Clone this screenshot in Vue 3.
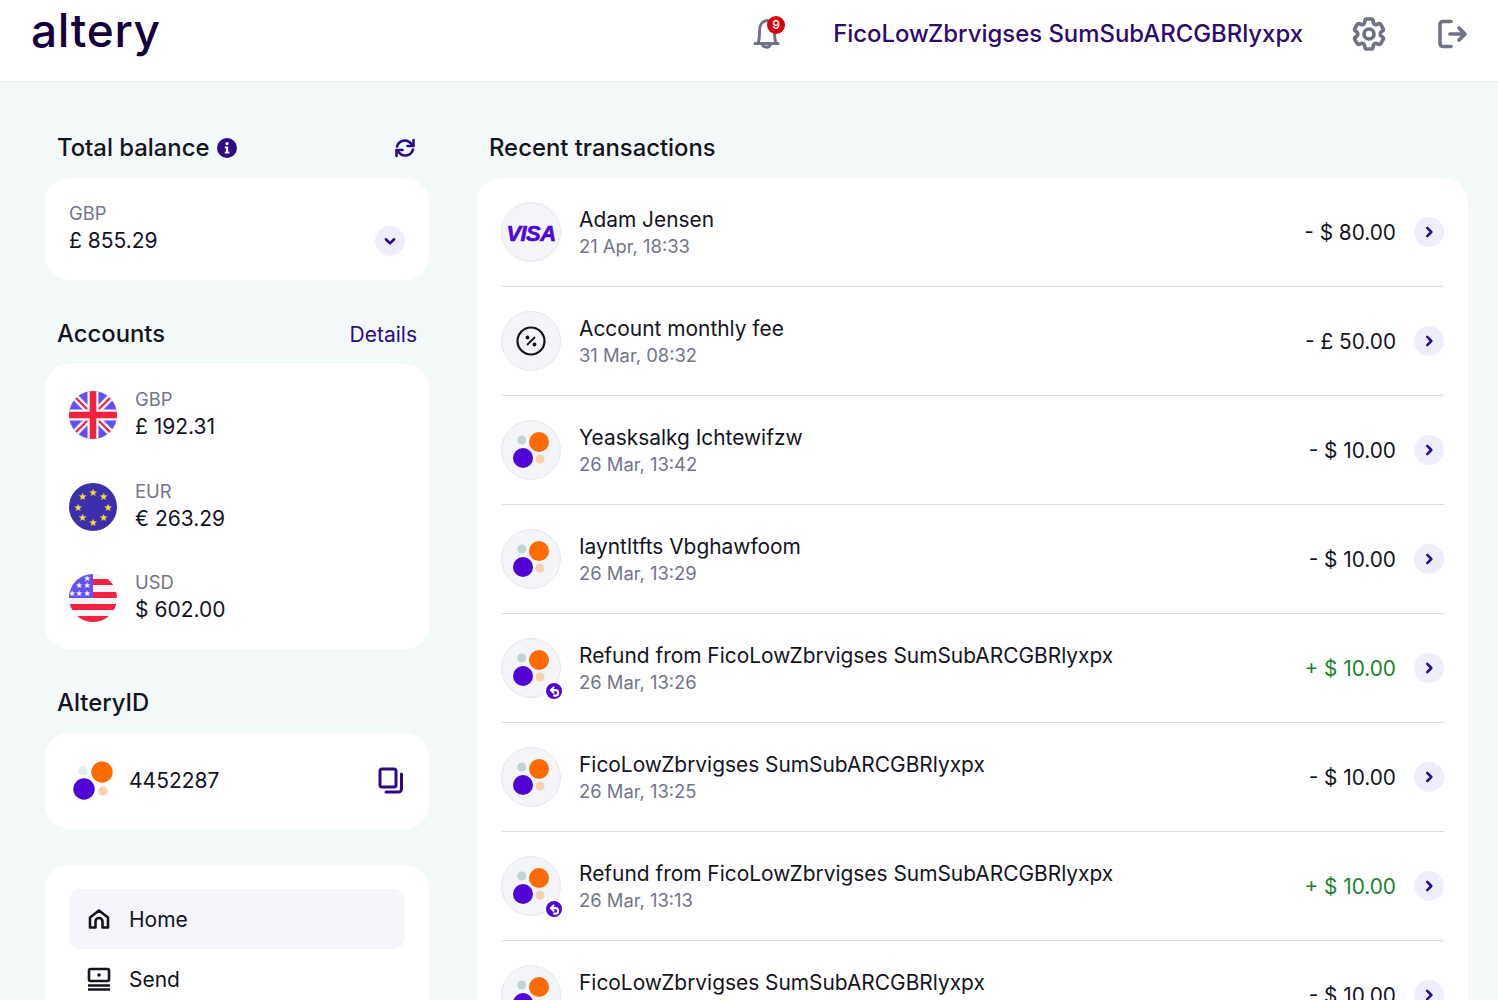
<script setup>
const accounts = [
  { code: "GBP", amount: "£ 192.31", flag: "uk" },
  { code: "EUR", amount: "€ 263.29", flag: "eu" },
  { code: "USD", amount: "$ 602.00", flag: "us" }
];

const company = "FicoLowZbrvigses SumSubARCGBRlyxpx";

const transactions = [
  { name: "Adam Jensen", date: "21 Apr, 18:33", amount: "- $ 80.00", icon: "visa" },
  { name: "Account monthly fee", date: "31 Mar, 08:32", amount: "- £ 50.00", icon: "fee" },
  { name: "Yeasksalkg Ichtewifzw", date: "26 Mar, 13:42", amount: "- $ 10.00", icon: "dots" },
  { name: "Iayntltfts Vbghawfoom", date: "26 Mar, 13:29", amount: "- $ 10.00", icon: "dots" },
  { name: "Refund from " + company, date: "26 Mar, 13:26", amount: "+ $ 10.00", icon: "dots", refund: true },
  { name: company, date: "26 Mar, 13:25", amount: "- $ 10.00", icon: "dots" },
  { name: "Refund from " + company, date: "26 Mar, 13:13", amount: "+ $ 10.00", icon: "dots", refund: true },
  { name: company, date: "26 Mar, 13:10", amount: "- $ 10.00", icon: "dots" }
];

const euStars = Array.from({ length: 8 }, (_, i) => {
  const a = (i * Math.PI) / 4;
  return { x: 24 + 15 * Math.sin(a), y: 24 - 15 * Math.cos(a) };
});
</script>

<template>
  <div class="page">
    <header class="topbar">
      <div class="logo">altery</div>
      <div class="top-right">
        <div class="bell">
          <svg width="30" height="36" viewBox="0 0 30 36" fill="none" stroke="#6f7282" stroke-width="3" stroke-linecap="round" stroke-linejoin="round">
            <path d="M3 27.500h23" />
            <path d="M6 27c1.500-3 1.500-7 1.500-12 0-6 3-10 7.500-10.500 5 .5 7.500 4.500 7.500 10.500 0 5 0 9 1.500 12" />
            <path d="M10.500 28.500a4.500 5 0 0 0 8 0" />
          </svg>
          <span class="bell-badge">9</span>
        </div>
        <div class="company">{{ company }}</div>
        <svg class="gear" width="40" height="40" viewBox="0 0 24 24" fill="none" stroke="#6f7282" stroke-width="2.200" stroke-linecap="round" stroke-linejoin="round">
          <path d="M9.594 3.940c.09-.542.56-.94 1.110-.94h2.593c.55 0 1.020.398 1.110.94l.213 1.281c.063.374.313.686.645.870.074.040.147.083.22.127.325.196.72.257 1.075.124l1.217-.456a1.125 1.125 0 0 1 1.370.490l1.296 2.247a1.125 1.125 0 0 1-.26 1.431l-1.003.827c-.293.241-.438.613-.43.992a7.723 7.723 0 0 1 0 .255c-.008.378.137.75.43.991l1.004.827c.424.35.534.955.26 1.430l-1.298 2.247a1.125 1.125 0 0 1-1.369.491l-1.217-.456c-.355-.133-.75-.072-1.076.124a6.470 6.470 0 0 1-.22.128c-.331.183-.581.495-.644.869l-.213 1.281c-.09.543-.56.94-1.110.94h-2.594c-.55 0-1.019-.398-1.110-.94l-.213-1.281c-.062-.374-.312-.686-.644-.870a6.520 6.520 0 0 1-.22-.127c-.325-.196-.72-.257-1.076-.124l-1.217.456a1.125 1.125 0 0 1-1.369-.49l-1.297-2.247a1.125 1.125 0 0 1 .26-1.431l1.004-.827c.292-.24.437-.613.43-.991a6.932 6.932 0 0 1 0-.255c.007-.38-.138-.751-.43-.992l-1.004-.827a1.125 1.125 0 0 1-.26-1.430l1.297-2.247a1.125 1.125 0 0 1 1.370-.491l1.216.456c.356.133.751.072 1.076-.124.072-.044.146-.086.22-.128.332-.183.582-.495.644-.869l.214-1.280Z" />
          <circle cx="12" cy="12" r="3" />
        </svg>
        <svg class="logout" width="32" height="32" viewBox="0 0 32 32" fill="none" stroke="#6f7282" stroke-width="3.600" stroke-linecap="round" stroke-linejoin="round">
          <path d="M15 3.500H7a3 3 0 0 0-3 3v19a3 3 0 0 0 3 3h8" />
          <path d="M14 16h15M23 10l6 6-6 6" />
        </svg>
      </div>
    </header>

    <main class="layout">
      <aside class="side">
        <div class="section-head first">
          <div class="title-wrap">
            <h2>Total balance</h2>
            <svg width="20" height="20" viewBox="0 0 20 20">
              <circle cx="10" cy="10" r="10" fill="#2e0a87" />
              <circle cx="10" cy="5.600" r="1.600" fill="#fff" />
              <path d="M7.800 8.500h3.400v5.200h1.200v1.800H7.800v-1.800h1.100v-3.400H7.800Z" fill="#fff" />
            </svg>
          </div>
          <svg width="24" height="24" viewBox="0 0 24 24" fill="none" stroke="#2e0a87" stroke-width="2.600" stroke-linecap="round" stroke-linejoin="round">
            <path d="M4 10.500A8 8 0 0 1 18 7.500l2 2" />
            <path d="M20.500 4v6h-6" />
            <path d="M20 13.500A8 8 0 0 1 6 16.500l-2-2" />
            <path d="M3.500 20v-6h6" />
          </svg>
        </div>
        <section class="card balance">
          <div>
            <div class="code">GBP</div>
            <div class="value">£ 855.29</div>
          </div>
          <button class="round-btn">
            <svg width="14" height="14" viewBox="0 0 12 12" fill="none" stroke="#2e0a87" stroke-width="2.200" stroke-linecap="round" stroke-linejoin="round"><path d="M2.500 4.500L6 8l3.500-3.500" /></svg>
          </button>
        </section>

        <div class="section-head">
          <h2>Accounts</h2>
          <a class="details">Details</a>
        </div>
        <section class="card accounts">
          <div v-for="acc in accounts" :key="acc.code" class="account">
            <svg class="flag" width="48" height="48" viewBox="0 0 48 48">
              <defs>
                <clipPath :id="'clip-' + acc.flag"><circle cx="24" cy="24" r="24" /></clipPath>
              </defs>
              <g :clip-path="'url(#clip-' + acc.flag + ')'">
                <template v-if="acc.flag === 'uk'">
                  <rect width="48" height="48" fill="#6250f5" />
                  <path d="M0 0L48 48M48 0L0 48" stroke="#f4f6f8" stroke-width="7" />
                  <path d="M4 4L19 19M44 4L29 19M4 44L19 29M44 44L29 29" stroke="#f5213f" stroke-width="2.200" />
                  <path d="M24 0V48M0 24H48" stroke="#f4f6f8" stroke-width="11" />
                  <path d="M24 0V48M0 24H48" stroke="#f5213f" stroke-width="6.500" />
                </template>
                <template v-else-if="acc.flag === 'eu'">
                  <rect width="48" height="48" fill="#3c2fae" />
                  <text v-for="(s, i) in euStars" :key="i" :x="s.x" :y="s.y + 3.500" class="eu-star" text-anchor="middle">★</text>
                </template>
                <template v-else>
                  <rect width="48" height="48" fill="#f1f4f6" />
                  <rect y="5" width="48" height="6" fill="#f5213f" />
                  <rect y="18" width="48" height="6" fill="#f5213f" />
                  <rect y="30" width="48" height="6" fill="#f5213f" />
                  <rect y="42" width="48" height="6" fill="#f5213f" />
                  <rect width="24" height="24" fill="#6250f5" />
                  <text x="18" y="7" class="us-star" text-anchor="middle">★</text>
                  <text x="10" y="14" class="us-star" text-anchor="middle">★</text>
                  <text x="18" y="14" class="us-star" text-anchor="middle">★</text>
                  <text x="3" y="22" class="us-star" text-anchor="middle">★</text>
                  <text x="10" y="22" class="us-star" text-anchor="middle">★</text>
                  <text x="18" y="22" class="us-star" text-anchor="middle">★</text>
                </template>
              </g>
            </svg>
            <div>
              <div class="code">{{ acc.code }}</div>
              <div class="value">{{ acc.amount }}</div>
            </div>
          </div>
        </section>

        <div class="section-head">
          <h2>AlteryID</h2>
        </div>
        <section class="card altery-id">
          <div class="id-left">
            <svg width="40" height="40" viewBox="0 0 40 40">
              <circle cx="29" cy="11" r="10.700" fill="#ff6b00" />
              <circle cx="10" cy="10" r="4.700" fill="#e2eef0" />
              <circle cx="11" cy="28" r="10.700" fill="#5005d6" />
              <circle cx="30" cy="30" r="4.700" fill="#f5d1ac" />
            </svg>
            <span class="value">4452287</span>
          </div>
          <svg width="26" height="28" viewBox="0 0 26 28" fill="none" stroke="#2e0a87" stroke-width="3" stroke-linecap="round" stroke-linejoin="round">
            <rect x="2" y="2" width="16" height="18" rx="2" />
            <path d="M23.500 7v15a3 3 0 0 1-3 3H8" />
          </svg>
        </section>

        <section class="card nav">
          <div class="nav-item active">
            <svg width="24" height="24" viewBox="0 0 24 24" fill="none" stroke="#14141f" stroke-width="2.600" stroke-linejoin="round">
              <path d="M3 20.500V10.500L12 3.500l9 7v10h-5.500v-6a3.500 3.500 0 0 0-7 0v6Z" />
            </svg>
            <span>Home</span>
          </div>
          <div class="nav-item">
            <svg width="24" height="24" viewBox="0 0 24 24" fill="none" stroke="#14141f" stroke-width="2.600">
              <rect x="2" y="2" width="20" height="12" rx="1.500" />
              <circle cx="12" cy="8" r="1.800" fill="#14141f" stroke="none" />
              <path d="M1 18.500h22M1 22.500h22" />
            </svg>
            <span>Send</span>
          </div>
        </section>
      </aside>

      <section class="content">
        <div class="section-head first">
          <h2>Recent transactions</h2>
        </div>
        <div class="card tx-card">
          <div v-for="(tx, i) in transactions" :key="i" class="tx">
            <div class="avatar">
              <span v-if="tx.icon === 'visa'" class="visa">VISA</span>
              <svg v-else-if="tx.icon === 'fee'" width="30" height="30" viewBox="0 0 30 30" fill="none" stroke="#14141f" stroke-width="2.200" stroke-linecap="round">
                <circle cx="15" cy="15" r="13.500" />
                <path d="M18.500 11.500l-7 7" stroke-width="1.800" />
                <circle cx="11.500" cy="11.500" r="0.900" fill="#14141f" />
                <circle cx="18.500" cy="18.500" r="0.900" fill="#14141f" />
              </svg>
              <svg v-else width="40" height="40" viewBox="0 0 40 40">
                <circle cx="28" cy="12" r="10" fill="#ff6b00" />
                <circle cx="10.700" cy="10" r="4.500" fill="#c3d3d6" />
                <circle cx="12" cy="28" r="10" fill="#5005d6" />
                <circle cx="29" cy="29" r="4.500" fill="#f5d1ac" />
              </svg>
              <span v-if="tx.refund" class="refund-badge">
                <svg width="11" height="11" viewBox="0 0 12 12" fill="none" stroke="#fff" stroke-width="2.200" stroke-linecap="round" stroke-linejoin="round">
                  <path d="M5 1.500L2 4.500l3 3" />
                  <path d="M2.500 4.500H7a3 3 0 0 1 0 6H5.500" />
                </svg>
              </span>
            </div>
            <div class="tx-text">
              <div class="tx-name">{{ tx.name }}</div>
              <div class="tx-date">{{ tx.date }}</div>
            </div>
            <div class="tx-amount" :class="{ plus: tx.refund }">{{ tx.amount }}</div>
            <button class="round-btn">
              <svg width="14" height="14" viewBox="0 0 12 12" fill="none" stroke="#2e0a87" stroke-width="2.200" stroke-linecap="round" stroke-linejoin="round"><path d="M4.500 2.500L8 6l-3.500 3.500" /></svg>
            </button>
          </div>
        </div>
      </section>
    </main>
  </div>
</template>

<style>
html, body {
  margin: 0;
  overflow: hidden;
  background: #f3f8f8;
}
</style>

<style scoped>
.page {
  height: 1000px;
  overflow: hidden;
  background: #f3f8f8;
  font-family: Inter, "Liberation Sans", sans-serif;
  color: #14141f;
}

.topbar {
  height: 81px;
  background: #fff;
  border-bottom: 1px solid #e6ebee;
  display: flex;
  justify-content: space-between;
  align-items: center;
  padding: 0 30px 0 31px;
}

.logo {
  font-size: 46px;
  font-weight: 500;
  line-height: 1;
  color: #14003c;
  margin-top: -22px;
  letter-spacing: 0.7px;
}

.top-right {
  display: flex;
  align-items: center;
  margin-top: -14px;
}

.bell {
  position: relative;
  width: 30px;
  height: 36px;
  margin-right: 51px;
}

.bell-badge {
  position: absolute;
  top: 0;
  right: -3px;
  width: 18px;
  height: 18px;
  border-radius: 50%;
  background: #d90007;
  color: #fff;
  font-size: 12px;
  font-weight: 600;
  line-height: 18px;
  text-align: center;
}

.company {
  font-size: 23.9px;
  font-weight: 500;
  color: #2e0a6f;
}

.gear {
  margin-left: 46px;
}

.logout {
  margin-left: 47px;
}

.layout {
  display: flex;
  gap: 48px;
  padding: 0 30px 0 45px;
}

.side {
  width: 384px;
  flex-shrink: 0;
}

.content {
  flex: 1;
}

.section-head {
  display: flex;
  justify-content: space-between;
  align-items: center;
  height: 30px;
  padding: 0 12px;
  margin: 39px 0 15px;
}

.section-head.first {
  margin-top: 51px;
}

.title-wrap {
  display: flex;
  align-items: center;
  gap: 8px;
}

h2 {
  margin: 0 0 1px;
  font-size: 23.85px;
  font-weight: 500;
}

.details {
  font-size: 21px;
  color: #2e0a87;
}

.card {
  background: #fff;
  border-radius: 24px;
}

.balance {
  height: 102px;
  box-sizing: border-box;
  padding: 24px;
  display: flex;
  justify-content: space-between;
  align-items: flex-end;
}

.code {
  font-size: 18.4px;
  line-height: 22px;
  color: #73758a;
}

.value {
  font-size: 21px;
  line-height: 28px;
  margin: 3px 0 1px;
}

.round-btn {
  width: 30px;
  height: 30px;
  padding: 0;
  border: none;
  border-radius: 50%;
  background: #eeedfc;
  display: flex;
  align-items: center;
  justify-content: center;
  flex-shrink: 0;
}

.accounts {
  height: 285px;
  box-sizing: border-box;
  padding: 24px;
}

.account {
  display: flex;
  align-items: center;
  gap: 18px;
  height: 54px;
  margin-bottom: 37.5px;
}

.account:last-child {
  margin-bottom: 0;
}

.eu-star {
  font-size: 10px;
  fill: #ffe019;
  font-family: "DejaVu Sans", sans-serif;
}

.us-star {
  font-size: 8px;
  fill: #fff;
  font-family: "DejaVu Sans", sans-serif;
}

.altery-id {
  height: 96px;
  box-sizing: border-box;
  padding: 0 25px 0 28px;
  display: flex;
  justify-content: space-between;
  align-items: center;
}

.altery-id .value {
  margin: 0;
}

.id-left {
  display: flex;
  align-items: center;
  gap: 16px;
}

.nav {
  margin-top: 36px;
  padding: 24px;
}

.nav-item {
  height: 60px;
  display: flex;
  align-items: center;
  gap: 18px;
  padding: 0 18px;
  font-size: 21px;
  border-radius: 12px;
}

.nav-item.active {
  background: #f5f5fb;
}

.tx-card {
  padding: 0 24px;
}

.tx {
  height: 108px;
  display: flex;
  align-items: center;
  border-bottom: 1px solid #dcdce6;
}

.tx:last-child {
  border-bottom: none;
}

.avatar {
  position: relative;
  width: 60px;
  height: 60px;
  box-sizing: border-box;
  border-radius: 50%;
  border: 1px solid #e6e7ec;
  background: #f3f5f8;
  display: flex;
  align-items: center;
  justify-content: center;
  flex-shrink: 0;
}

.visa {
  font-family: "Liberation Sans", sans-serif;
  font-size: 22px;
  font-weight: 700;
  font-style: italic;
  color: #5005d6;
  letter-spacing: -0.6px;
  -webkit-text-stroke: 0.6px #5005d6;
  margin-top: 3px;
}

.refund-badge {
  position: absolute;
  right: -4px;
  bottom: -4px;
  width: 16px;
  height: 16px;
  border: 2px solid #fff;
  border-radius: 50%;
  background: #5005d6;
  display: flex;
  align-items: center;
  justify-content: center;
}

.tx-text {
  flex: 1;
  margin-left: 18px;
  padding-top: 2px;
}

.tx-name {
  font-size: 20.9px;
  line-height: 27px;
}

.tx-date {
  font-size: 18.4px;
  line-height: 27px;
  color: #73758a;
}

.tx-amount {
  font-size: 20.8px;
  margin-right: 18px;
}

.tx-amount.plus {
  color: #17852d;
}
</style>
